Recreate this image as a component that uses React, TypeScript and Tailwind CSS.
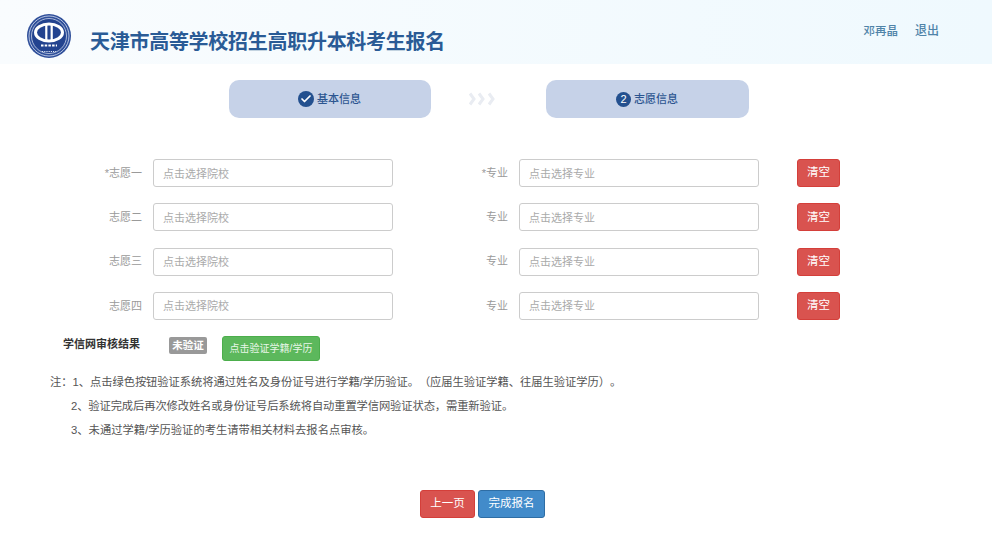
import { Check } from "lucide-react";

const ROWS = [
  { school: "*志愿一", major: "*专业" },
  { school: "志愿二", major: "专业" },
  { school: "志愿三", major: "专业" },
  { school: "志愿四", major: "专业" },
];

const FONT = "font-['Liberation_Sans','Noto_Sans_CJK_SC',sans-serif]";

function Logo() {
  return (
    <svg width="44" height="44" viewBox="0 0 44 44" className="shrink-0">
      <circle cx="22" cy="22" r="22" fill="#2f4f9a" />
      <circle cx="22" cy="22" r="20" fill="none" stroke="#c3cfe8" strokeWidth="0.9" />
      <circle cx="22" cy="22" r="17.500" fill="#23438f" stroke="#dfe6f4" strokeWidth="0.7" />
      <ellipse cx="22" cy="18.500" rx="13.500" ry="8.500" fill="none" stroke="#fff" strokeWidth="3" />
      <path d="M19.300 11v16M24.700 11v16" stroke="#fff" strokeWidth="2.200" fill="none" />
      <path d="M14 31.500h16" stroke="#fff" strokeWidth="1.800" strokeDasharray="2.500 1.200" />
      <path d="M15 37.500h14" stroke="#dfe6f4" strokeWidth="1" strokeDasharray="1.200 1" />
    </svg>
  );
}

function Chevrons() {
  return (
    <svg width="28" height="14" viewBox="0 0 28 14" fill="none" stroke="#e9ecf2" strokeWidth="3">
      <path d="M2 1.500l4 5.500-4 5.500" />
      <path d="M11 1.500l4 5.500-4 5.500" />
      <path d="M21 1.500l4 5.500-4 5.500" />
    </svg>
  );
}

function Field({ label, placeholder, labelWidth, width }: { label: string; placeholder: string; labelWidth: string; width: string }) {
  return (
    <div className="flex items-center">
      <span className={`${labelWidth} text-right text-[11px] text-[#9a9a9a]`}>{label}</span>
      <input
        readOnly
        placeholder={placeholder}
        className={`${width} ml-[11px] h-[28px] rounded-[3px] border border-[#ccc] bg-white px-[9px] pt-px text-[11px] outline-none placeholder:text-[#aaa]`}
      />
    </div>
  );
}

export default function App() {
  return (
    <div className={`${FONT} h-[537px] w-[992px] overflow-hidden bg-white`}>
      <header className="flex h-[64px] items-start bg-gradient-to-r from-[#f9fcfe] to-[#eff9fe] pl-[27px] pr-[53px]">
        <div className="mt-[14px]">
          <Logo />
        </div>
        <h1 className="ml-[19px] mt-[29px] text-[20px] leading-[26px] font-bold tracking-[-0.28px] text-[#2a5b96]">
          天津市高等学校招生高职升本科考生报名
        </h1>
        <div className="ml-auto mt-[23px] flex gap-[17px] text-[11.500px] leading-[16px] font-medium text-[#4f83a8]">
          <span>邓再晶</span>
          <span className="text-xs">退出</span>
        </div>
      </header>

      <div className="mt-[16px] flex items-center pl-[229px]">
        <div className="flex h-[38px] w-[202px] items-center justify-center gap-[3px] rounded-[10px] bg-[#c6d2e8] pr-[1px] text-[11px] font-medium text-[#2c5590]">
          <span className="flex h-[16px] w-[16px] items-center justify-center rounded-full bg-[#23508f] text-white">
            <Check size={12} strokeWidth={3.5} />
          </span>
          基本信息
        </div>
        <div className="ml-[37px] flex w-[78px]">
          <Chevrons />
        </div>
        <div className="flex h-[38px] w-[203px] items-center justify-center gap-[3px] rounded-[10px] bg-[#c6d2e8] pr-[1px] text-[11px] font-medium text-[#2c5590]">
          <span className="flex h-[15px] w-[15px] items-center justify-center rounded-full bg-[#23508f] text-[11px] text-white">
            2
          </span>
          志愿信息
        </div>
      </div>

      <div className="mt-[41px] flex flex-col gap-[16.300px] pl-[100px]">
        {ROWS.map((row) => (
          <div key={row.school} className="flex items-center">
            <Field label={row.school} placeholder="点击选择院校" labelWidth="w-[42px]" width="w-[240px]" />
            <div className="ml-[79px]">
              <Field label={row.major} placeholder="点击选择专业" labelWidth="w-[36px]" width="w-[240px]" />
            </div>
            <button className="ml-[38px] h-[28px] w-[43px] rounded-[3px] border border-[#d43f3a] bg-[#d9534f] text-[11.500px] text-white">
              清空
            </button>
          </div>
        ))}
      </div>

      <div className="mt-[16px] flex items-start pl-[63px]">
        <span className="w-[106px] text-[11px] leading-[16px] font-bold text-[#333]">学信网审核结果</span>
        <span className="mt-px h-[17px] w-[38px] rounded-[2px] bg-[#999] text-center text-[10.500px] leading-[17px] font-bold text-white">未验证</span>
        <button className="ml-[15px] h-[25px] w-[98px] rounded-[3px] border border-[#4cae4c] bg-[#5cb85c] text-[10px] text-[#e8f6e8]">
          点击验证学籍/学历
        </button>
      </div>

      <div className="mt-[9px] pl-[50px] text-[11.300px] leading-[24px] text-[#555] [text-spacing-trim:space-all]">
        <p className="tracking-[-0.06px]">注：1、点击绿色按钮验证系统将通过姓名及身份证号进行学籍/学历验证。（应届生验证学籍、往届生验证学历）。</p>
        <p className="pl-[21px] tracking-[-0.12px]">2、验证完成后再次修改姓名或身份证号后系统将自动重置学信网验证状态，需重新验证。</p>
        <p className="pl-[21px]">3、未通过学籍/学历验证的考生请带相关材料去报名点审核。</p>
      </div>

      <div className="mt-[48px] flex gap-[3px] pl-[420px]">
        <button className="h-[28px] w-[55px] rounded-[3px] border border-[#d43f3a] bg-[#d9534f] text-[11.500px] text-white">上一页</button>
        <button className="h-[28px] w-[67px] rounded-[3px] border border-[#2e6da4] bg-[#428bca] text-[11.500px] text-white">完成报名</button>
      </div>
    </div>
  );
}
